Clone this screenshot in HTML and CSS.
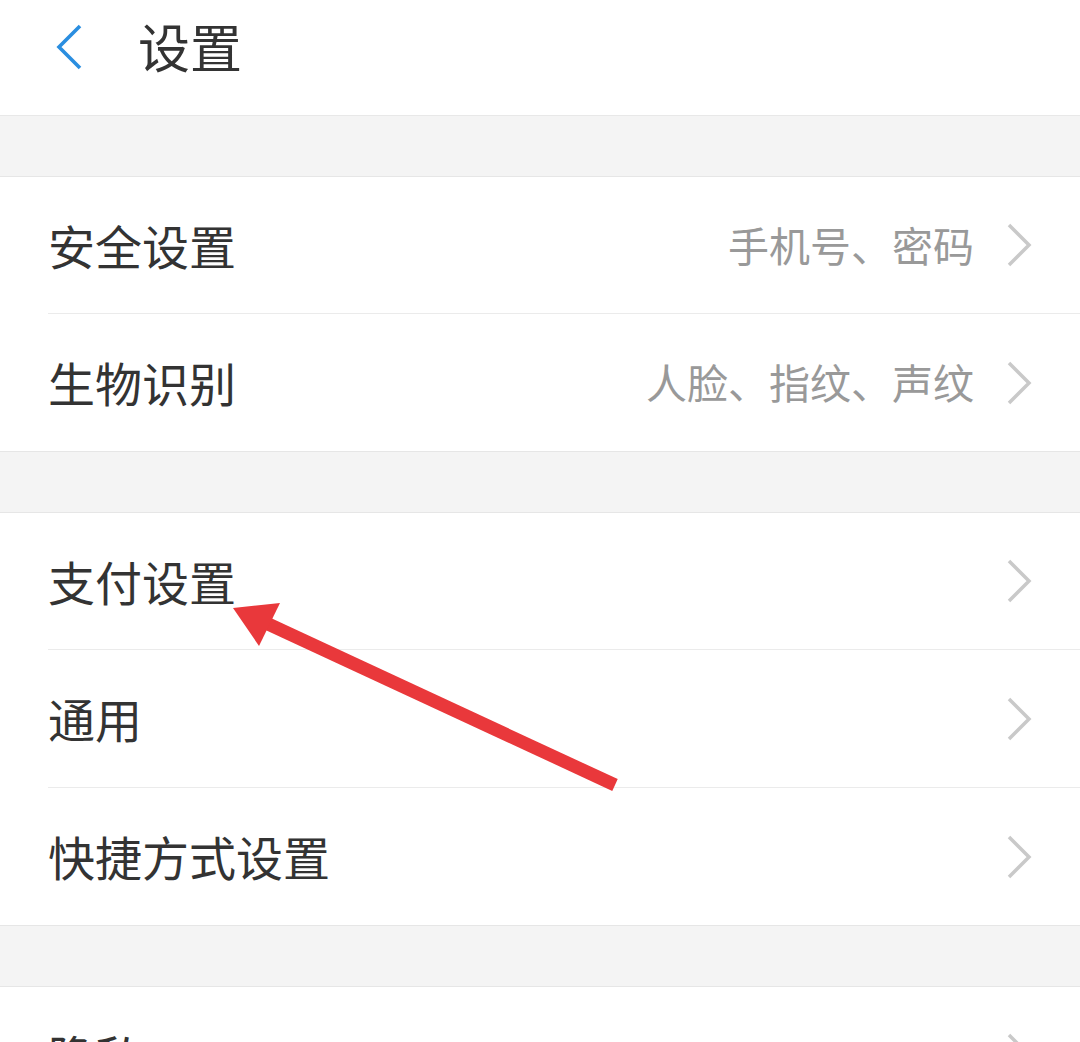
FILE: index.html
```html
<!DOCTYPE html>
<html lang="zh-CN">
<head>
<meta charset="utf-8">
<title>设置</title>
<link rel="stylesheet" href="styles.css">
</head>
<body>
<div class="page">
  <header class="topbar">
    <span class="back">
      <svg width="30" height="50" viewBox="0 0 30 50"><polyline points="24,3 3,24 24,45" fill="none" stroke="#2a8ee0" stroke-width="3.6" stroke-linecap="butt" stroke-linejoin="miter"/></svg>
    </span>
    <h1 class="title">设置</h1>
  </header>
  <div class="gap"></div>
  <section class="group">
    <div class="row"><span class="label">安全设置</span><span class="value">手机号、密码</span><svg class="chev" width="26" height="44" viewBox="0 0 26 44"><polyline points="3,2 23,22 3,42" fill="none" stroke="#c9c9c9" stroke-width="3.5"/></svg></div>
    <div class="row"><span class="label">生物识别</span><span class="value">人脸、指纹、声纹</span><svg class="chev" width="26" height="44" viewBox="0 0 26 44"><polyline points="3,2 23,22 3,42" fill="none" stroke="#c9c9c9" stroke-width="3.5"/></svg></div>
  </section>
  <div class="gap"></div>
  <section class="group">
    <div class="row"><span class="label">支付设置</span><span class="value"></span><svg class="chev" width="26" height="44" viewBox="0 0 26 44"><polyline points="3,2 23,22 3,42" fill="none" stroke="#c9c9c9" stroke-width="3.5"/></svg></div>
    <div class="row"><span class="label">通用</span><span class="value"></span><svg class="chev" width="26" height="44" viewBox="0 0 26 44"><polyline points="3,2 23,22 3,42" fill="none" stroke="#c9c9c9" stroke-width="3.5"/></svg></div>
    <div class="row"><span class="label">快捷方式设置</span><span class="value"></span><svg class="chev" width="26" height="44" viewBox="0 0 26 44"><polyline points="3,2 23,22 3,42" fill="none" stroke="#c9c9c9" stroke-width="3.5"/></svg></div>
  </section>
  <div class="gap"></div>
  <section class="group">
    <div class="row"><span class="label">隐私</span><span class="value"></span><svg class="chev" width="26" height="44" viewBox="0 0 26 44"><polyline points="3,2 23,22 3,42" fill="none" stroke="#c9c9c9" stroke-width="3.5"/></svg></div>
  </section>
  <svg class="annotation" width="1080" height="1042" viewBox="0 0 1080 1042">
    <line x1="266" y1="623" x2="615" y2="785" stroke="#e9383b" stroke-width="13"/>
    <polygon points="233,608 280,603 259,646" fill="#e9383b"/>
  </svg>
</div>
</body>
</html>
```
FILE: styles.css
```css
html, body {
  margin: 0;
  padding: 0;
  background: #ffffff;
}
body {
  font-family: "Noto Sans CJK SC", "Noto Sans", sans-serif;
  color: #333333;
}
.page {
  position: relative;
  width: 1080px;
  height: 1042px;
  overflow: hidden;
}
.topbar {
  display: flex;
  align-items: center;
  border-bottom: 1px solid #e8e8e8;
  box-sizing: border-box;
  height: 116px;
  padding-bottom: 20px;
}
.back {
  display: flex;
  width: 30px;
  height: 50px;
  margin-left: 56px;
}
.title {
  margin: -4px 0 0 52px;
  font-size: 52px;
  font-weight: 400;
  color: #333333;
  line-height: 1;
}
.gap {
  height: 60px;
  background: #f4f4f4;
}
.group {
  border-top: 1px solid #e6e6e6;
  border-bottom: 1px solid #e6e6e6;
  background: #ffffff;
}
.row {
  display: flex;
  align-items: center;
  height: 136px;
  margin-left: 48px;
  padding-right: 48px;
  box-sizing: border-box;
}
.row + .row {
  border-top: 1px solid #ebebeb;
  height: 138px;
}
.label {
  font-size: 47px;
  color: #333333;
  line-height: 1;
  margin-top: -2px;
}
.value {
  flex: 1;
  text-align: right;
  font-size: 41px;
  color: #999999;
  line-height: 1;
  margin-right: 32px;
  margin-top: -2px;
}
.chev {
  display: block;
}
.annotation {
  position: absolute;
  left: 0;
  top: 0;
  pointer-events: none;
}
```
